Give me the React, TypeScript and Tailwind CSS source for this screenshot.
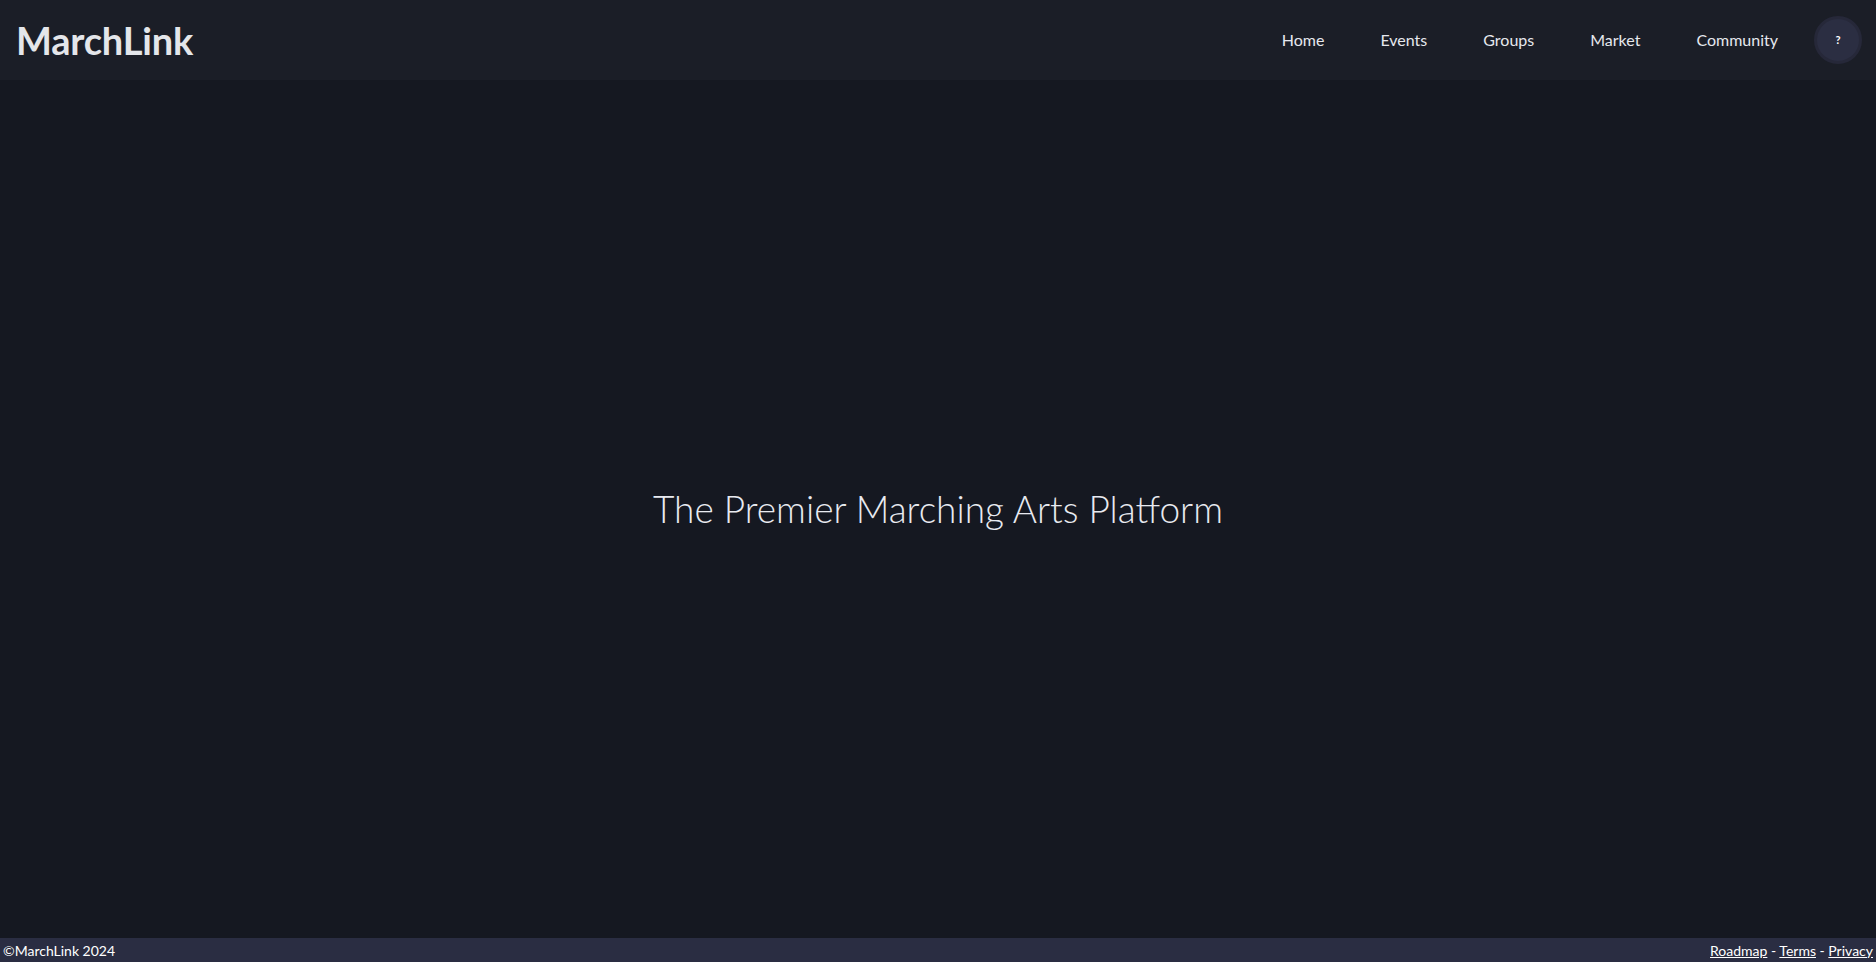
import React from 'react';

const navItems = ['Home', 'Events', 'Groups', 'Market', 'Community'];

const App: React.FC = () => {
  return (
    <div className="flex h-[962px] flex-col bg-[#151821] font-['Lato','Open_Sans',sans-serif] text-[#e6e8ee]">
      <header className="flex h-[80px] shrink-0 items-center justify-between bg-[#1b1e27] pl-4 pr-[14px]">
        <h1 className="text-[38px] font-bold tracking-[-0.2px] text-[#e4e6ea]">MarchLink</h1>
        <nav className="flex items-center">
          {navItems.map(item => (
            <a key={item} href="#" className="px-7 text-[16px] text-[#e6e8ee]">
              {item}
            </a>
          ))}
          <button className="ml-2 flex h-12 w-12 items-center justify-center rounded-full border-[3px] border-[#262839] bg-[#2b2e42] text-[11px] font-bold text-white">
            ?
          </button>
        </nav>
      </header>

      <main className="flex flex-1 items-center justify-center">
        <h2 className="text-[37px] font-light text-[#e8eaf0]">The Premier Marching Arts Platform</h2>
      </main>

      <footer className="flex h-[24px] shrink-0 items-center justify-between bg-[#2a2d42] px-[3px] text-[14px] text-white">
        <span>©MarchLink 2024</span>
        <span>
          <a href="#" className="underline">Roadmap</a> - <a href="#" className="underline">Terms</a> - <a href="#" className="underline">Privacy</a>
        </span>
      </footer>
    </div>
  );
};

export default App;
